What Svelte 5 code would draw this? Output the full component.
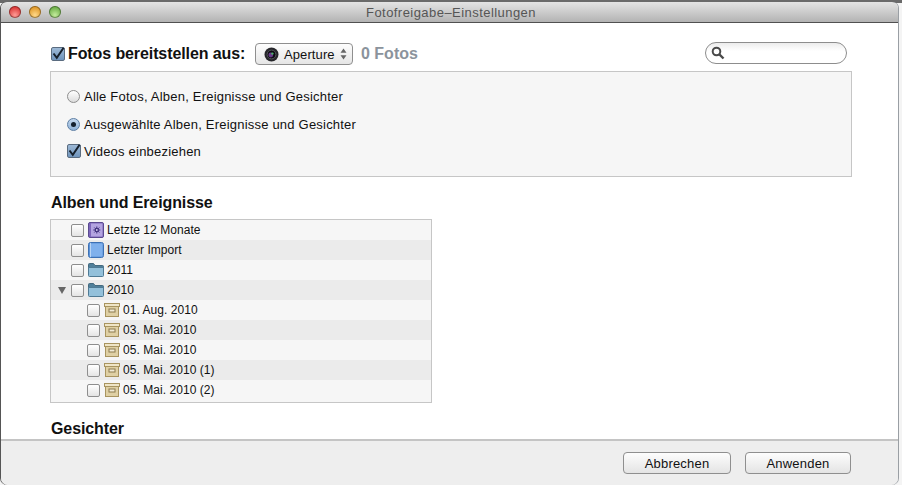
<script>
  const rows = [
    { label: 'Letzte 12 Monate', icon: 'smart', level: 0 },
    { label: 'Letzter Import', icon: 'album', level: 0 },
    { label: '2011', icon: 'folder', level: 0 },
    { label: '2010', icon: 'folder', level: 0, open: true },
    { label: '01. Aug. 2010', icon: 'box', level: 1 },
    { label: '03. Mai. 2010', icon: 'box', level: 1 },
    { label: '05. Mai. 2010', icon: 'box', level: 1 },
    { label: '05. Mai. 2010 (1)', icon: 'box', level: 1 },
    { label: '05. Mai. 2010 (2)', icon: 'box', level: 1 }
  ];
</script>

{#snippet check()}
  <span class="check">
    <svg width="14" height="14" viewBox="0 0 14 14">
      <path d="M2.5 6.5 L5.8 10.8 L12.6 0.8" fill="none" stroke="#16202c" stroke-width="2" />
    </svg>
  </span>
{/snippet}

{#snippet rowIcon(kind)}
  {#if kind === 'smart'}
    <svg class="ico" width="16" height="16" viewBox="0 0 16 16">
      <rect x="0.5" y="0.5" width="15" height="15" rx="1.5" fill="#7d66bb" stroke="#5a4a90" />
      <rect x="3" y="1.5" width="11.5" height="13" fill="#b3a4e0" />
      <path d="M8.8 4.5v7M5.3 8h7M6.3 5.5l5 5M11.3 5.5l-5 5" stroke="#43347f" stroke-width="1" />
      <circle cx="8.8" cy="8" r="2.2" fill="#43347f" />
      <circle cx="8.8" cy="8" r="0.9" fill="#d8d0f0" />
    </svg>
  {:else if kind === 'album'}
    <svg class="ico" width="16" height="16" viewBox="0 0 16 16">
      <rect x="0.5" y="0.5" width="15" height="15" rx="2" fill="#5c93d8" stroke="#3c70b4" />
      <rect x="3" y="1.5" width="11.5" height="13" fill="#7fb0ec" />
      <path d="M2.5 1v14" stroke="#b8d4f4" stroke-width="1" />
    </svg>
  {:else if kind === 'folder'}
    <svg class="ico" width="16" height="14" viewBox="0 0 16 14">
      <path d="M0.5 3V1.5Q0.5 0.5 1.5 0.5H5.5L7 2.5H14.5Q15.5 2.5 15.5 3.5V5H0.5Z" fill="#4f7f9a" stroke="#44697e" />
      <path d="M0.5 4.5H15.5V12.5Q15.5 13.5 14.5 13.5H1.5Q0.5 13.5 0.5 12.5Z" fill="#93c0da" stroke="#4f7a94" />
    </svg>
  {:else}
    <svg class="ico" width="16" height="14" viewBox="0 0 16 14">
      <rect x="0.5" y="0.5" width="15" height="3" fill="#efe5c6" stroke="#a8945f" />
      <rect x="1.5" y="3.5" width="13" height="10" fill="#dfd0a4" stroke="#a8945f" />
      <rect x="5" y="6" width="6" height="3" fill="#f1ebd6" stroke="#8c7a4c" />
    </svg>
  {/if}
{/snippet}

<div class="desk">
  <div class="win">
    <header class="titlebar">
      <div class="lights">
        <span class="light red"></span>
        <span class="light amber"></span>
        <span class="light green"></span>
      </div>
      <div class="title">Fotofreigabe–Einstellungen</div>
    </header>

    <main class="body">
      <div class="top">
        {@render check()}
        <h2 class="lead">Fotos bereitstellen aus:</h2>
        <div class="popup">
          <svg width="15" height="15" viewBox="0 0 15 15">
            <circle cx="7.5" cy="7.5" r="7" fill="#26262a" />
            <circle cx="7.5" cy="7.5" r="4.4" fill="#0c0c12" stroke="#55555c" />
            <circle cx="6.8" cy="8" r="2.4" fill="#6a3a8c" />
            <circle cx="8.4" cy="6.6" r="1.2" fill="#4db06a" />
          </svg>
          <span>Aperture</span>
          <svg width="7" height="12" viewBox="0 0 7 12">
            <path d="M3.5 0.5 L6.5 4.8 H0.5Z M3.5 11.5 L6.5 7.2 H0.5Z" fill="#666" />
          </svg>
        </div>
        <span class="count">0 Fotos</span>
        <div class="search">
          <svg width="14" height="14" viewBox="0 0 14 14">
            <circle cx="5.5" cy="5.5" r="3.8" fill="none" stroke="#4a4a4a" stroke-width="2" />
            <path d="M8.5 8.5 L12.5 12.5" stroke="#4a4a4a" stroke-width="2.4" />
          </svg>
        </div>
      </div>

      <section class="panel">
        <label class="opt first"><span class="radio"></span>Alle Fotos, Alben, Ereignisse und Gesichter</label>
        <label class="opt second"><span class="radio on"></span>Ausgewählte Alben, Ereignisse und Gesichter</label>
        <label class="opt third">{@render check()}Videos einbeziehen</label>
      </section>

      <h3 class="heading albums">Alben und Ereignisse</h3>

      <div class="tree">
        {#each rows as row, i}
          <div class="row" class:alt={i % 2 === 1} class:sub={row.level === 1}>
            {#if row.open}<span class="tri"></span>{/if}
            <span class="box"></span>
            {@render rowIcon(row.icon)}
            <span class="name">{row.label}</span>
          </div>
        {/each}
      </div>

      <h3 class="heading faces">Gesichter</h3>
    </main>

    <footer class="foot">
      <button class="btn cancel">Abbrechen</button>
      <button class="btn apply">Anwenden</button>
    </footer>
  </div>
</div>

<style>
  :global(body) {
    margin: 0;
    background: #fff;
  }
  .desk {
    width: 902px;
    height: 485px;
    overflow: hidden;
    background: linear-gradient(#6a6a6a 0, #6a6a6a 3px, #f4f4f4 3px);
    font-family: "Liberation Sans", Arial, sans-serif;
    color: #111;
  }
  .win {
    box-sizing: border-box;
    width: 897px;
    height: 483px;
    margin: 2px 0 0 1px;
    border-radius: 6px 6px 7px 7px;
    overflow: hidden;
    display: flex;
    flex-direction: column;
    box-shadow: -1px 0 0 #555, 1px 0 0 #9a9fa4;
  }
  .titlebar {
    flex: none;
    height: 20px;
    border-bottom: 1px solid #505050;
    background: linear-gradient(#e4e4e4, #b3b3b3);
    display: flex;
    align-items: center;
    position: relative;
  }
  .lights {
    display: flex;
    gap: 8px;
    margin-left: 8px;
  }
  .light {
    width: 12px;
    height: 12px;
    border-radius: 50%;
    box-shadow: inset 0 0 0 1px rgba(0, 0, 0, 0.35);
  }
  .red { background: radial-gradient(circle at 50% 75%, #ff9c96, #dc3b3a 70%); }
  .amber { background: radial-gradient(circle at 50% 75%, #ffd98a, #e09a2b 70%); }
  .green { background: radial-gradient(circle at 50% 75%, #c4ec9c, #6fb04a 70%); }
  .title {
    position: absolute;
    left: 3px;
    right: 0;
    text-align: center;
    font-size: 13px;
    letter-spacing: 0.45px;
    color: #555;
  }
  .body {
    flex: 1;
    min-height: 0;
    background: #fff;
    padding: 0 46px 0 49px;
    overflow: hidden;
  }
  .top {
    height: 48px;
    display: flex;
    align-items: center;
    padding-top: 14px;
    box-sizing: border-box;
  }
  .check {
    flex: none;
    box-sizing: border-box;
    width: 14px;
    height: 14px;
    margin-left: 1px;
    border: 1px solid #5a6c80;
    border-radius: 2px;
    background: linear-gradient(#9db9d6, #6f94bc);
    display: block;
  }
  .check svg {
    display: block;
    margin: -1px;
  }
  .lead {
    margin: 0 0 0 3px;
    font-size: 16px;
    letter-spacing: -0.1px;
    font-weight: bold;
    width: 187px;
    white-space: nowrap;
  }
  .popup {
    box-sizing: border-box;
    width: 98px;
    height: 22px;
    border: 1px solid #8f8f8f;
    border-radius: 4px;
    background: linear-gradient(#fdfdfd, #e6e6e6);
    display: flex;
    align-items: center;
    padding-left: 8px;
    font-size: 13px;
    letter-spacing: 0.1px;
  }
  .popup span {
    margin: 0 5px 0 5px;
  }
  .count {
    margin-left: 8px;
    font-size: 16px;
    font-weight: bold;
    color: #8b939c;
  }
  .search {
    box-sizing: border-box;
    width: 142px;
    height: 22px;
    margin: -2px 5px 0 auto;
    border: 1px solid #8d8d8d;
    border-radius: 11px;
    background: linear-gradient(#ececec, #fff 40%);
    display: flex;
    align-items: center;
    padding-left: 5px;
  }
  .panel {
    box-sizing: border-box;
    height: 106px;
    border: 1px solid #c6c6c6;
    background: #f6f6f6;
    padding: 16px 0 0 16px;
  }
  .opt {
    display: flex;
    align-items: center;
    gap: 4px;
    height: 16px;
    font-size: 13px;
    letter-spacing: 0.21px;
  }
  .opt.second {
    margin-top: 12px;
  }
  .opt.third {
    margin-top: 11px;
    gap: 3px;
  }
  .opt .check {
    margin-left: 0;
  }
  .radio {
    flex: none;
    box-sizing: border-box;
    width: 13px;
    height: 13px;
    border-radius: 50%;
    border: 1px solid #8e8e8e;
    background: linear-gradient(#fff, #dcdcdc);
    display: flex;
    align-items: center;
    justify-content: center;
  }
  .radio.on {
    border-color: #5c7ea4;
    background: linear-gradient(#c4d8ee, #8fb2d8);
  }
  .radio.on::after {
    content: "";
    width: 5px;
    height: 5px;
    border-radius: 50%;
    background: #14202e;
  }
  .heading {
    margin: 0;
    font-size: 16px;
    letter-spacing: -0.1px;
    font-weight: bold;
    line-height: 18px;
    padding-left: 1px;
  }
  .albums {
    margin-top: 17px;
  }
  .tree {
    box-sizing: border-box;
    width: 382px;
    height: 184px;
    margin-top: 7px;
    border: 1px solid #c6c6c6;
    background: #f6f6f6;
  }
  .row {
    height: 20px;
    display: flex;
    align-items: center;
    padding-left: 20px;
    font-size: 12px;
    letter-spacing: 0.05px;
    position: relative;
    background: #f6f6f6;
  }
  .row.alt {
    background: #ebebeb;
  }
  .row.sub {
    padding-left: 36px;
  }
  .tri {
    position: absolute;
    left: 7px;
    top: 7px;
    width: 0;
    height: 0;
    border-left: 4px solid transparent;
    border-right: 4px solid transparent;
    border-top: 7px solid #666;
  }
  .box {
    flex: none;
    box-sizing: border-box;
    width: 13px;
    height: 13px;
    border: 1px solid #8e8e8e;
    border-radius: 2px;
    background: linear-gradient(#fff, #e4e4e4);
    margin-right: 4px;
  }
  .ico {
    flex: none;
    display: block;
  }
  .name {
    margin-left: 3px;
  }
  .faces {
    margin-top: 17px;
  }
  .foot {
    flex: none;
    box-sizing: border-box;
    height: 46px;
    border-top: 2px solid #c4c4c4;
    background: #eee;
    display: flex;
    justify-content: flex-end;
    align-items: flex-start;
    gap: 14px;
    padding: 11px 47px 0 0;
  }
  .btn {
    box-sizing: border-box;
    height: 22px;
    padding: 0;
    border: 1px solid #8f8f8f;
    border-radius: 4px;
    background: linear-gradient(#fdfdfd, #e4e4e4);
    font: 13px "Liberation Sans", Arial, sans-serif;
    letter-spacing: 0.2px;
    color: #111;
  }
  .cancel { width: 108px; }
  .apply { width: 106px; }
</style>
